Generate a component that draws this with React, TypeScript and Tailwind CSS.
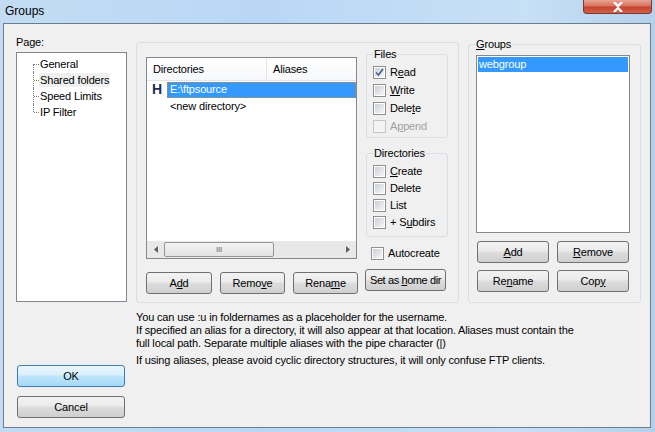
import React from "react";

const font = { fontFamily: '"Liberation Sans", Arial, sans-serif' };

const U = ({ children }: { children: React.ReactNode }) => <span className="underline underline-offset-[1px]">{children}</span>;

const Btn = ({
  children,
  w,
  def,
}: {
  children: React.ReactNode;
  w: string;
  def?: boolean;
}) => (
  <div
    className={
      "h-[22px] flex items-center justify-center whitespace-nowrap rounded-[3px] border text-black " +
      w +
      (def
        ? " border-[#3c7fb1] bg-[linear-gradient(#eaf6fd_0%,#d9f0fc_45%,#bee6fd_50%,#a7d9f5_100%)]"
        : " border-[#707070] bg-[linear-gradient(#f2f2f2_0%,#ebebeb_45%,#dddddd_50%,#cfcfcf_100%)]")
    }
  >
    <span>{children}</span>
  </div>
);

const Check = ({ checked, disabled }: { checked?: boolean; disabled?: boolean }) => (
  <div
    className={
      "w-[13px] h-[13px] border flex items-center justify-center shrink-0 " +
      (disabled ? "border-[#c5c5c5] bg-[#f4f4f4]" : "border-[#8e8f8f] bg-white")
    }
  >
    <div
      className={
        "w-[9px] h-[9px] flex items-center justify-center " +
        (disabled ? "" : "bg-[linear-gradient(135deg,#cbcfd5,#f6f6f6)]")
      }
    >
      {checked && (
        <svg width="9" height="9" viewBox="0 0 9 9">
          <path d="M1 4.5 L3.5 7 L8 1" fill="none" stroke="#4a5f97" strokeWidth="1.6" />
        </svg>
      )}
    </div>
  </div>
);

const CheckRow = ({
  label,
  checked,
  disabled,
  h = "h-[18px]",
}: {
  label: React.ReactNode;
  checked?: boolean;
  disabled?: boolean;
  h?: string;
}) => (
  <div className={"flex items-center gap-[4px] " + h}>
    <Check checked={checked} disabled={disabled} />
    <span className={"whitespace-nowrap " + (disabled ? "text-[#a0a0a0]" : "text-black")}>{label}</span>
  </div>
);

const Group = ({
  title,
  className,
  children,
}: {
  title: React.ReactNode;
  className: string;
  children: React.ReactNode;
}) => (
  <div className={"relative border border-[#d5dfe5] rounded-[3px] " + className}>
    <span className="absolute -top-[8px] left-[6px] px-[1px] bg-[#f0f0f0] leading-[14px] text-black">
      {title}
    </span>
    {children}
  </div>
);

export default function App() {
  return (
    <div
      className="w-[655px] h-[432px] bg-[linear-gradient(90deg,#c3dcf3_0%,#b9d7f5_40%,#c8e0f6_80%,#b4d0ec_100%)] overflow-hidden"
      style={font}
    >
      {/* title bar */}
      <div className="h-[23px] flex items-start justify-between">
        <span className="pl-[5px] pt-[2px] text-[12px] text-black">Groups</span>
        <div className="mr-[3px] w-[69px] h-[14px] rounded-b-[4px] border border-t-0 border-[#7a3a30] bg-[linear-gradient(#e8a393_0%,#d8735f_45%,#c7432d_55%,#d0614c_100%)] flex items-center justify-center">
          <svg width="12" height="10" viewBox="0 0 12 10">
            <path d="M2 0 L6 4 L10 0 M2 10 L6 6 L10 10" fill="none" stroke="#fff" strokeWidth="2.4" />
          </svg>
        </div>
      </div>

      {/* client area */}
      <div className="ml-[3px] w-[648px] h-[405px] bg-[#f0f0f0] border border-[#6c7e8e] flex text-[11px] tracking-[-0.15px] text-black">
        {/* left column */}
        <div className="w-[132px] pl-[12px] pt-[11px] flex flex-col">
          <div className="h-[17px] leading-[14px]">Page:</div>
          <div className="w-[111px] h-[250px] bg-white border border-[#828790] pt-[3px] pl-[13px]">
            {["General", "Shared folders", "Speed Limits", "IP Filter"].map((t, i) => (
              <div key={t} className="relative h-[16px] flex items-center pl-[9px]">
                <div
                  className={
                    "absolute left-[3px] w-px border-l border-dotted border-[#808080] " +
                    (i === 0 ? "top-[8px] h-[8px]" : i === 3 ? "top-0 h-[8px]" : "top-0 h-[16px]")
                  }
                />
                <div className="absolute left-[4px] top-[8px] w-[5px] border-t border-dotted border-[#808080]" />
                <span className={"px-[1px] leading-[14px] " + (i === 1 ? "bg-[#f0f0f0]" : "")}>{t}</span>
              </div>
            ))}
          </div>
          <div className="mt-[63px] ml-[1px] flex flex-col gap-[9px]">
            <Btn w="w-[108px]" def>
              OK
            </Btn>
            <Btn w="w-[108px]">Cancel</Btn>
          </div>
        </div>

        {/* main column */}
        <div className="flex flex-col pt-[18px]">
          <div className="flex">
            {/* shared folders panel */}
            <div className="w-[323px] h-[261px] border border-[#d5dfe5] rounded-[3px] flex pl-[9px] pt-[14px]">
              <div className="flex flex-col">
                <div className="w-[211px] h-[202px] bg-white border border-[#828790] flex flex-col">
                  <div className="h-[23px] flex border-b border-[#e5e5e5] bg-[linear-gradient(#ffffff,#f7f8fa)]">
                    <div className="w-[120px] pl-[6px] flex items-center border-r border-[#e5e5e5]">Directories</div>
                    <div className="pl-[6px] flex items-center">Aliases</div>
                  </div>
                  <div className="flex h-[17px] items-center">
                    <span className="w-[20px] pl-[5px] text-[14px] font-bold text-[#1f2f4f]">H</span>
                    <div className="flex-1 h-[16px] bg-[#3399ff] border border-dotted border-[#d08a30] text-white flex items-center pl-[2px]">
                      E:\ftpsource
                    </div>
                  </div>
                  <div className="h-[17px] pl-[23px] flex items-center">&lt;new directory&gt;</div>
                  <div className="flex-1" />
                  <div className="h-[17px] bg-[#e8e8e8] flex items-center">
                    <div className="w-[17px] flex justify-center">
                      <svg width="4" height="7" viewBox="0 0 4 7">
                        <path d="M4 0 L0 3.5 L4 7 Z" fill="#606060" />
                      </svg>
                    </div>
                    <div className="w-[110px] h-[15px] rounded-[2px] border border-[#959595] bg-[linear-gradient(#f3f3f3,#e3e3e3)] flex items-center justify-center text-[8px] leading-none text-[#606060]">
                      III
                    </div>
                    <div className="flex-1" />
                    <div className="w-[17px] flex justify-center">
                      <svg width="4" height="7" viewBox="0 0 4 7">
                        <path d="M0 0 L4 3.5 L0 7 Z" fill="#606060" />
                      </svg>
                    </div>
                  </div>
                </div>
                <div className="mt-[13px] flex gap-[8px]">
                  <Btn w="w-[66px]">
                    A<U>d</U>d
                  </Btn>
                  <Btn w="w-[65px]">
                    Remo<U>v</U>e
                  </Btn>
                  <Btn w="w-[65px]">
                    Rena<U>m</U>e
                  </Btn>
                </div>
              </div>
              <div className="ml-[7px] -mt-[3px] flex flex-col">
                <Group title="Files" className="ml-[1px] w-[82px] h-[84px] pt-[8px] pl-[6px]">
                  <CheckRow label={<>R<U>e</U>ad</>} checked />
                  <CheckRow label={<><U>W</U>rite</>} />
                  <CheckRow label={<>Dele<U>t</U>e</>} />
                  <CheckRow label={<>A<U>p</U>pend</>} disabled />
                </Group>
                <Group title="Directories" className="ml-[1px] mt-[15px] w-[82px] h-[84px] pt-[9px] pl-[6px]">
                  <CheckRow h="h-[17px]" label={<><U>C</U>reate</>} />
                  <CheckRow h="h-[17px]" label="Delete" />
                  <CheckRow h="h-[17px]" label="List" />
                  <CheckRow h="h-[17px]" label={<>+ S<U>u</U>bdirs</>} />
                </Group>
                <div className="mt-[7px] pl-[6px]">
                  <CheckRow label="Autocreate" />
                </div>
                <div className="mt-[7px] tracking-[-0.4px]">
                  <Btn w="w-[81px]">
                    Set as <U>h</U>ome dir
                  </Btn>
                </div>
              </div>
            </div>

            {/* groups panel */}
            <Group title={<><U>G</U>roups</>} className="ml-[9px] mt-[2px] w-[173px] h-[259px] pl-[7px] pt-[10px]">
              <div className="w-[154px] h-[178px] bg-white border border-[#828790] p-[1px]">
                <div className="h-[15px] bg-[#3399ff] text-white pl-[1px] flex items-center">webgroup</div>
              </div>
              <div className="mt-[8px] pl-[1px] flex flex-col gap-[7px]">
                <div className="flex gap-[8px]">
                  <Btn w="w-[72px]">
                    <U>A</U>dd
                  </Btn>
                  <Btn w="w-[72px]">
                    <U>R</U>emove
                  </Btn>
                </div>
                <div className="flex gap-[8px]">
                  <Btn w="w-[72px]">
                    Re<U>n</U>ame
                  </Btn>
                  <Btn w="w-[72px]">
                    Cop<U>y</U>
                  </Btn>
                </div>
              </div>
            </Group>
          </div>

          <div className="mt-[8px] leading-[13px]">
            <div>You can use :u in foldernames as a placeholder for the username.</div>
            <div>If specified an alias for a directory, it will also appear at that location. Aliases must contain the</div>
            <div>full local path. Separate multiple aliases with the pipe character (|)</div>
            <div className="mt-[4px]">If using aliases, please avoid cyclic directory structures, it will only confuse FTP clients.</div>
          </div>
        </div>
      </div>
    </div>
  );
}
